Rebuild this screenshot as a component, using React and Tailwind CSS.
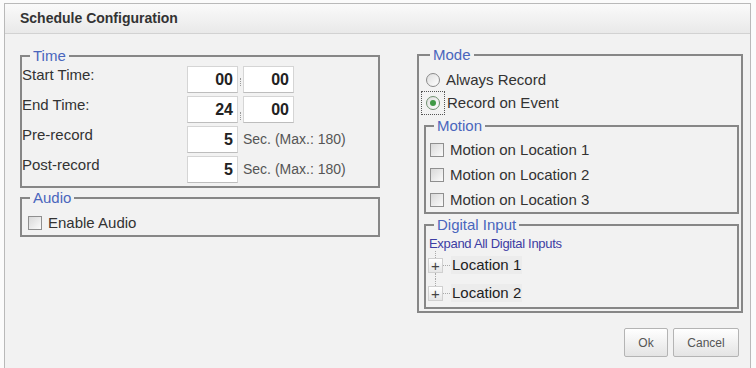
import React from "react";

// small widgets drawn with plain spans so they look like the old java-ish dialog
function CheckBox() {
  return (
    <span className="inline-block w-[14px] h-[14px] shrink-0 border border-[#8f8f8f] bg-linear-to-br from-[#d9d9d9] to-[#fbfbfb]" />
  );
}

function Radio({ checked, focused }) {
  return (
    <span
      className={
        "w-[14px] h-[14px] shrink-0 flex " +
        (focused ? "outline-1 outline-dotted outline-[#555] outline-offset-[4px]" : "")
      }
    >
      <span
        className={
          "w-[14px] h-[14px] rounded-full border flex items-center justify-center bg-linear-to-br from-[#dedede] to-white " +
          (checked ? "border-[#6f8f6f]" : "border-[#8a8a8a]")
        }
      >
        {checked && <span className="w-[6px] h-[6px] rounded-full bg-[#3f9a45]" />}
      </span>
    </span>
  );
}

function Group({ title, legendOffset = "ml-[8px]", className = "", children }) {
  return (
    <fieldset className={"border-2 border-[#878787] min-w-0 " + className}>
      <legend
        className={legendOffset + " px-[3px] text-[15px] leading-4 text-[#4a66bd]"}
      >
        {title}
      </legend>
      {children}
    </fieldset>
  );
}

function Cell({ value }) {
  return (
    <div className="w-[51px] h-[27px] bg-white border border-[#d5d5d5] border-b-[#bdbdbd] flex items-center justify-end pr-[4px] text-[16px] font-bold text-[#222]">
      {value}
    </div>
  );
}

function TimeRow({ label, children }) {
  return (
    <div className="flex items-start h-[27px]">
      <span className="w-[165px] text-[15px] leading-[17px] text-[#333]">{label}</span>
      {children}
    </div>
  );
}

function TreeItem({ label, last }) {
  return (
    <div className="flex items-stretch h-[28px] pl-[1px]">
      <div className="w-[15px] flex flex-col items-center">
        <span className="flex-1 border-l border-dotted border-[#aaa]" />
        <span className="w-[15px] h-[15px] border border-[#d0d0d0] bg-linear-to-b from-white to-[#e6e6e6] flex items-center justify-center text-[15px] leading-none text-[#444]">
          +
        </span>
        <span className={"flex-1 " + (last ? "" : "border-l border-dotted border-[#aaa]")} />
      </div>
      <div className="flex items-center">
        <span className="w-[7px] border-t border-dotted border-[#aaa]" />
        <span className="ml-[1px] px-[1px] bg-[#ececec] text-[15px] leading-[18px] text-[#222]">{label}</span>
      </div>
    </div>
  );
}

export default function App() {
  const motions = ["Motion on Location 1", "Motion on Location 2", "Motion on Location 3"];

  return (
    <div className="w-[756px] h-[368px] overflow-hidden bg-[#fbfbfb] pt-[3px] pl-[4px] font-['Liberation_Sans',Arial,sans-serif]">
      <div className="w-[747px] h-[370px] border border-[#b9b9b9] bg-[#f2f2f2]">
        {/* Title bar */}
        <div className="h-[30px] border-b border-[#d2d2d2] bg-linear-to-b from-[#fafafa] to-[#e9e9e9] flex items-center pl-[15px] text-[14px] font-bold text-[#333]">
          Schedule Configuration
        </div>

        <div className="flex pt-[13px] pl-[15px]">
          {/* Left column */}
          <div className="w-[360px] pt-[1px]">
            <Group title="Time">
              <div className="pt-[2px] pb-[3px] flex flex-col gap-[3px]">
                <TimeRow label="Start Time:">
                  <Cell value="00" />
                  <span className="w-[5px] h-[27px] flex justify-center">
                    <span className="mt-[12px] h-[8px] border-l border-dotted border-[#999]" />
                  </span>
                  <Cell value="00" />
                </TimeRow>
                <TimeRow label="End Time:">
                  <Cell value="24" />
                  <span className="w-[5px] h-[27px] flex justify-center">
                    <span className="mt-[16px] h-[8px] border-l border-dotted border-[#999]" />
                  </span>
                  <Cell value="00" />
                </TimeRow>
                <TimeRow label="Pre-record">
                  <Cell value="5" />
                  <span className="self-center ml-[5px] text-[14px] text-[#555]">Sec. (Max.: 180)</span>
                </TimeRow>
                <TimeRow label="Post-record">
                  <Cell value="5" />
                  <span className="self-center ml-[5px] text-[14px] text-[#555]">Sec. (Max.: 180)</span>
                </TimeRow>
              </div>
            </Group>

            <Group title="Audio" className="mt-[2px]">
              <div className="pt-[8px] pb-[4px] pl-[6px] flex items-center h-[29px]">
                <CheckBox />
                <span className="ml-[6px] text-[15px] leading-[17px] text-[#333]">Enable Audio</span>
              </div>
            </Group>
          </div>

          {/* Right column */}
          <div className="ml-[37px] w-[326px]">
            <Group title="Mode" legendOffset="ml-[11px]">
              <div className="pl-[5px] pr-[2px] pb-[2px]">
                <div className="pt-[5px]">
                  <div className="h-[23px] flex items-center pl-[2px]">
                    <Radio />
                    <span className="ml-[6px] text-[15px] leading-[17px] text-[#333]">Always Record</span>
                  </div>
                  <div className="h-[23px] flex items-center pl-[2px]">
                    <Radio checked focused />
                    <span className="ml-[7px] text-[15px] leading-[17px] text-[#333]">Record on Event</span>
                  </div>
                </div>

                <Group title="Motion" className="mt-[4px]">
                  <div className="pt-[3px] pl-[4px]">
                    {motions.map((m) => (
                      <div key={m} className="h-[25px] flex items-center">
                        <CheckBox />
                        <span className="ml-[6px] text-[15px] leading-[17px] text-[#333]">{m}</span>
                      </div>
                    ))}
                  </div>
                </Group>

                <Group title="Digital Input" className="mt-[3px]">
                  <div className="pt-[3px] pl-[1px]">
                    <div className="h-[15px] pl-[2px] text-[13px] leading-[15px] tracking-[-0.3px] text-[#3d3da3]">
                      Expand All Digital Inputs
                    </div>
                    <TreeItem label="Location 1" />
                    <TreeItem label="Location 2" last />
                  </div>
                </Group>
              </div>
            </Group>

            <div className="flex justify-end gap-[5px] pr-[4px] mt-[15px]">
              <button className="h-[29px] w-[44px] border border-[#b4b4b4] rounded-[2px] bg-linear-to-b from-white to-[#e4e4e4] text-[12px] text-[#555]">
                Ok
              </button>
              <button className="h-[29px] w-[66px] border border-[#b4b4b4] rounded-[2px] bg-linear-to-b from-white to-[#e4e4e4] text-[12px] text-[#555]">
                Cancel
              </button>
            </div>
          </div>
        </div>
      </div>
    </div>
  );
}
